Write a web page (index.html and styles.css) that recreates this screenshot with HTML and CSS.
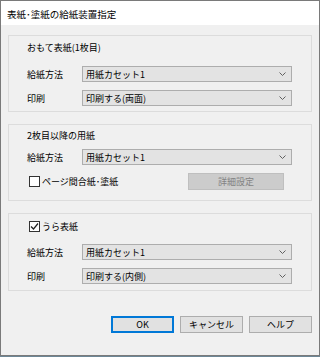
FILE: index.html
```html
<!DOCTYPE html>
<html lang="ja">
<head>
<meta charset="utf-8">
<link rel="stylesheet" href="styles.css">
</head>
<body>
<div class="window">
  <div class="titlebar">表紙･塗紙の給紙装置指定</div>
  <div class="content">
    <div class="group g1">
      <div class="heading">おもて表紙(1枚目)</div>
      <div class="row r-first">
        <span class="label">給紙方法</span>
        <div class="select"><span>用紙カセット1</span><svg class="chev" width="7" height="4" viewBox="0 0 7 4"><path d="M0.5 0.5 L3.5 3.5 L6.5 0.5" fill="none" stroke="#606060" stroke-width="1"/></svg></div>
      </div>
      <div class="row r-next">
        <span class="label">印刷</span>
        <div class="select"><span>印刷する(両面)</span><svg class="chev" width="7" height="4" viewBox="0 0 7 4"><path d="M0.5 0.5 L3.5 3.5 L6.5 0.5" fill="none" stroke="#606060" stroke-width="1"/></svg></div>
      </div>
    </div>

    <div class="group g2">
      <div class="heading">2枚目以降の用紙</div>
      <div class="row r-first2">
        <span class="label">給紙方法</span>
        <div class="select"><span>用紙カセット1</span><svg class="chev" width="7" height="4" viewBox="0 0 7 4"><path d="M0.5 0.5 L3.5 3.5 L6.5 0.5" fill="none" stroke="#606060" stroke-width="1"/></svg></div>
      </div>
      <div class="row-check">
        <label class="check"><span class="box"></span><span>ページ間合紙･塗紙</span></label>
        <div class="btn disabled">詳細設定</div>
      </div>
    </div>

    <div class="group g3">
      <label class="check head-check"><span class="box checked"><svg width="9" height="9" viewBox="0 0 9 9"><path d="M1 4.5 L3.5 7 L8 1.5" fill="none" stroke="#222" stroke-width="1.2"/></svg></span><span>うら表紙</span></label>
      <div class="row r-first">
        <span class="label">給紙方法</span>
        <div class="select"><span>用紙カセット1</span><svg class="chev" width="7" height="4" viewBox="0 0 7 4"><path d="M0.5 0.5 L3.5 3.5 L6.5 0.5" fill="none" stroke="#606060" stroke-width="1"/></svg></div>
      </div>
      <div class="row r-next">
        <span class="label">印刷</span>
        <div class="select"><span>印刷する(内側)</span><svg class="chev" width="7" height="4" viewBox="0 0 7 4"><path d="M0.5 0.5 L3.5 3.5 L6.5 0.5" fill="none" stroke="#606060" stroke-width="1"/></svg></div>
      </div>
    </div>

    <div class="buttons">
      <div class="btn default">OK</div>
      <div class="btn">キャンセル</div>
      <div class="btn">ヘルプ</div>
    </div>
  </div>
</div>
</body>
</html>
```

FILE: styles.css
```css
* { box-sizing: border-box; }
html, body { margin: 0; padding: 0; }
body {
  width: 320px;
  height: 357px;
  background: #6d8796;
  font-family: "Noto Sans CJK JP", "Liberation Sans", sans-serif;
  font-size: 9px;
  color: #000;
}
.window {
  width: 320px;
  height: 356px;
  border: 1px solid #7a7a7a;
  background: #f0f0f0;
  display: flex;
  flex-direction: column;
}
.titlebar {
  height: 24px;
  background: #fff;
  padding-left: 6px;
  padding-top: 1px;
  display: flex;
  align-items: center;
  font-size: 9.5px;
}
.content {
  padding: 10px 7px 0 7px;
  display: flex;
  flex-direction: column;
}
.group {
  border: 1px solid #dcdcdc;
  padding: 0 19px 0 18px;
  display: flex;
  flex-direction: column;
}
.g1 { padding-top: 5px; padding-bottom: 5px; }
.g2 { margin-top: 12px; padding-top: 4px; padding-bottom: 10px; }
.g3 { margin-top: 12px; padding-top: 5px; padding-bottom: 6px; }
.heading {
  height: 14px;
  line-height: 14px;
}
.row {
  display: flex;
  align-items: center;
}
.r-first { margin-top: 11px; }
.r-next { margin-top: 8px; }
.r-first2 { margin-top: 6px; }
.label {
  width: 55px;
  flex: none;
}
.select {
  flex: 1;
  height: 16px;
  background: #e3e3e3;
  border: 1px solid #adadad;
  display: flex;
  align-items: center;
  justify-content: space-between;
  padding: 0 5px 0 3px;
}
.chev { flex: none; }
.row-check {
  margin-top: 8px;
  height: 17px;
  display: flex;
  align-items: center;
  justify-content: space-between;
  padding-right: 8px;
}
.check {
  display: flex;
  align-items: center;
  gap: 2px;
  margin-left: 2px;
}
.box {
  width: 11px;
  height: 11px;
  border: 1px solid #333;
  background: #fff;
  display: flex;
  align-items: center;
  justify-content: center;
}
.head-check { height: 14px; }
.btn {
  height: 17px;
  width: 63px;
  background: #e1e1e1;
  border: 1px solid #adadad;
  display: flex;
  align-items: center;
  justify-content: center;
}
.btn.disabled {
  width: 96px;
  background: #cccccc;
  border-color: #bfbfbf;
  color: #838383;
}
.btn.default {
  border: 1px solid #0078d7;
  box-shadow: inset 0 0 0 1px #0078d7;
}
.buttons {
  margin-top: 25px;
  display: flex;
  justify-content: flex-end;
  gap: 6px;
  padding-right: 0;
}
```
